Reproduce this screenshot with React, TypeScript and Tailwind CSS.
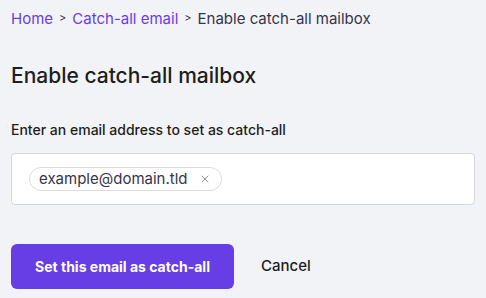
import { X } from "lucide-react";

export default function App() {
    return (
        <div className="min-h-[298px] bg-[#f2f3f6] px-[11px] pt-[8px] text-[#36344d] font-['Inter',sans-serif]">
            <nav className="flex items-center gap-[6px] text-[15px] leading-[21px]">
                <a className="text-[#673de6]" href="#">Home</a>
                <span className="text-[11px] text-[#36344d]">&gt;</span>
                <a className="text-[#673de6]" href="#">Catch-all email</a>
                <span className="text-[11px] text-[#36344d]">&gt;</span>
                <span className="text-[#36344d]">Enable catch-all mailbox</span>
            </nav>

            <h1 className="mt-[33px] text-[21px] leading-[28px] font-medium text-[#1d1e20]">
                Enable catch-all mailbox
            </h1>

            <label className="mt-[30px] block text-[14px] leading-[20px] font-medium text-[#1d1e20]">
                Enter an email address to set as catch-all
            </label>

            <div className="mt-[13px] flex h-[52px] items-center rounded-[4px] border border-[#d5d5dc] bg-white px-[17px]">
                <div className="flex h-[24px] items-center gap-[11px] rounded-full border border-[#dadce0] pl-[9px] pr-[10px] text-[15px] text-[#36344d]">
                    <span>example@domain.tld</span>
                    <X size={12} strokeWidth={1.8} className="text-[#8c8c98]" />
                </div>
            </div>

            <div className="mt-[39px] flex items-center gap-[27px]">
                <button className="h-[45px] w-[223px] rounded-[6px] bg-[#673de6] text-[14px] font-bold text-white">
                    Set this email as catch-all
                </button>
                <button className="text-[15px] font-medium text-[#1d1e20]">Cancel</button>
            </div>
        </div>
    );
}
